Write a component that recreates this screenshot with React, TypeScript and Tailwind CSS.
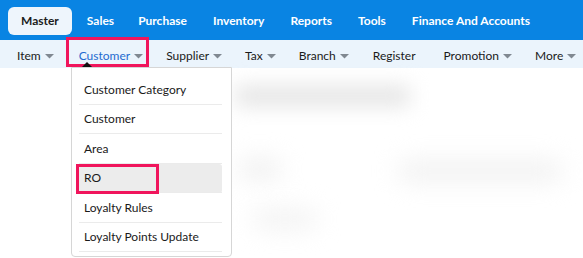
import React from "react";

const Caret = () => (
  <svg width="9" height="5" viewBox="0 0 9 5" className="ml-[4px] mt-[1px]">
    <path d="M0 0 L9 0 L4.5 4.5 Z" fill="#808891" />
  </svg>
);

export default function App() {
  const top = ["Sales", "Purchase", "Inventory", "Reports", "Tools", "Finance And Accounts"];
  const items = ["Customer Category", "Customer", "Area", "RO", "Loyalty Rules", "Loyalty Points Update"];
  return (
    <div className="w-[583px] h-[258px] overflow-hidden bg-white relative" style={{ fontFamily: "Lato, 'Open Sans', sans-serif" }}>
      <div className="h-[40px] bg-[#0984e3] flex items-center pl-[8px] pt-[1px]">
        <div className="h-[28px] px-[13px] rounded-[6px] bg-[#eef5fc] flex items-center text-[12px] font-bold text-[#1c1c1c]">Master</div>
        <div className="flex items-center gap-[26px] ml-[15px] text-[12px] font-bold text-white">
          {top.map((t) => (
            <span key={t} className={t === "Sales" ? "mr-[-2px]" : ""}>{t}</span>
          ))}
        </div>
      </div>
      <div className="h-[28px] bg-[#ebf4fc] flex items-center pl-[17px] pt-[3px] text-[12px] text-[#1a1a1a]">
        <div className="flex items-center">Item<Caret /></div>
        <div className="flex items-center ml-[25px] text-[#1f6bd0] relative">
          Customer<Caret />
          <div className="absolute left-[-13px] top-[-10px] w-[83px] h-[30px] border-[3px] border-[#f0155c]" />
          <div className="absolute left-[3px] top-[15px] w-0 h-0 border-l-[5px] border-r-[5px] border-b-[5px] border-l-transparent border-r-transparent border-b-[#111]" />
        </div>
        <div className="flex items-center ml-[23px]">Supplier<Caret /></div>
        <div className="flex items-center ml-[23px]">Tax<Caret /></div>
        <div className="flex items-center ml-[23px]">Branch<Caret /></div>
        <div className="flex items-center ml-[24px]">Register</div>
        <div className="flex items-center ml-[28px]">Promotion<Caret /></div>
        <div className="flex items-center ml-[23px]">More<Caret /></div>
      </div>
      <div className="relative h-[190px]">
        <div className="flex pt-[18px] pl-[235px] blur-[10px]">
          <div className="w-[175px] h-[20px] bg-[#e4e4e4] rounded" />
        </div>
        <div className="flex pl-[240px] pt-[55px] gap-[120px] blur-[12px]">
          <div className="w-[40px] h-[16px] bg-[#ececec] rounded" />
          <div className="w-[160px] h-[20px] bg-[#f0f0f0] rounded" />
        </div>
        <div className="flex pl-[255px] pt-[30px] blur-[12px]">
          <div className="w-[60px] h-[16px] bg-[#efefef] rounded" />
        </div>
        <div className="absolute left-[71px] top-[-1px] w-[161px] h-[190px] bg-white border border-[#d6d6d6] rounded-b-[4px] pl-[4px] pr-[9px] pt-[7px] text-[12px] text-[#1a1a1a]">
          {items.map((t) => (
            <div key={t} className={"relative h-[29.5px] flex items-center " + (t === "RO" ? "bg-[#ececec] rounded-[3px]" : "")}>
              <span className="pl-[8px]">{t}</span>
              <div className="absolute left-[3px] right-0 bottom-0 h-px bg-[#ebebeb]" />
              {t === "RO" && <div className="absolute left-0 top-0 w-[83px] h-[30px] border-[3px] border-[#f0155c]" />}
            </div>
          ))}
        </div>
      </div>
    </div>
  );
}
